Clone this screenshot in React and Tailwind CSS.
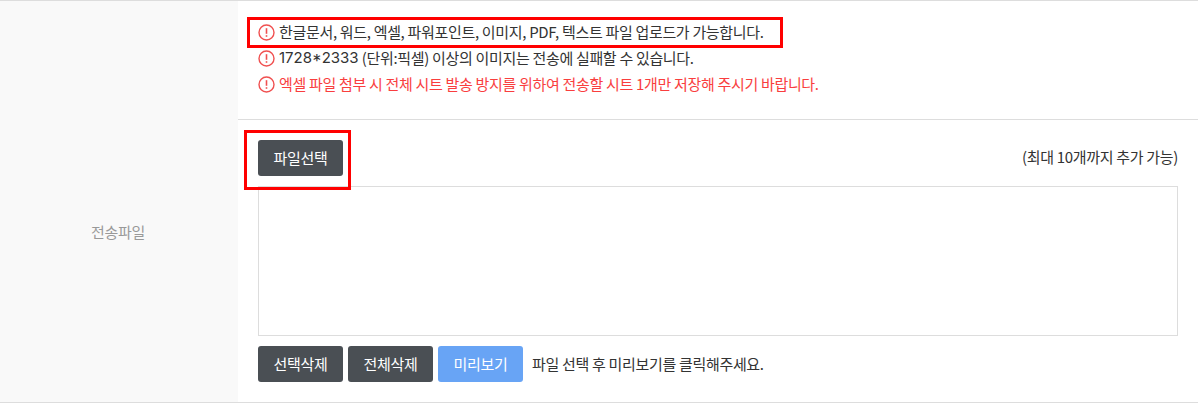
function WarnIcon() {
  return (
    <svg width="17" height="17" viewBox="0 0 17 17" className="mr-[4px] shrink-0" fill="none">
      <circle cx="8.5" cy="8.5" r="7.5" stroke="#f05050" strokeWidth="1.4" />
      <path d="M8.5 4.2v5.6" stroke="#f05050" strokeWidth="1.6" />
      <path d="M8.5 11.2v1.6" stroke="#f05050" strokeWidth="1.6" />
    </svg>
  )
}

function Notice({ children, red }) {
  return (
    <li className={`flex items-center h-[26px] whitespace-pre ${red ? 'text-[#f93e3e]' : 'text-[#333]'}`}>
      <WarnIcon />
      {children}
    </li>
  )
}

function Btn({ children, blue }) {
  return (
    <button className={`w-[85px] h-[36px] rounded-[3px] text-white text-[15px] ${blue ? 'bg-[#68a4f5]' : 'bg-[#4a4f54]'}`}>
      {children}
    </button>
  )
}

export default function App() {
  return (
    <div className="w-[1202px] h-[404px] bg-white font-['Noto_Sans_CJK_KR','Noto_Sans',sans-serif] text-[15px] text-[#333] tracking-[-0.32px]">
      <div className="flex w-[1198px] h-[403px] border-t border-b border-[#ddd]">
        <div className="w-[238px] bg-[#f9f9f9] flex items-center justify-center text-[#999] pt-[62px] pr-[2px]">
          전송파일
        </div>
        <div className="flex-1 flex flex-col">
          <ul className="h-[119px] border-b border-[#ddd] pl-5 pt-[18px] relative">
            <Notice>한글문서, 워드, 엑셀, 파워포인트, 이미지, PDF, 텍스트 파일 업로드가 가능합니다.</Notice>
            <Notice><span className="font-['Inter'] tracking-normal">1728*2333</span> (단위:픽셀) 이상의 이미지는 전송에 실패할 수 있습니다.</Notice>
            <Notice red>엑셀 파일 첨부 시 전체 시트 발송 방지를 위하여 전송할 시트 1개만 저장해 주시기 바랍니다.</Notice>
            <div className="absolute left-[9px] top-[16px] w-[536px] h-[31px] border-[3px] border-[#f00]" />
          </ul>
          <div className="flex-1 pl-5 pr-[20px] pt-[20px]">
            <div className="relative flex items-center justify-between">
              <Btn>파일선택</Btn>
              <span className="mb-[2px]">(최대 10개까지 추가 가능)</span>
              <div className="absolute left-[-14px] top-[-10px] w-[107px] h-[60px] border-[3px] border-[#f00]" />
            </div>
            <div className="mt-[10px] h-[150px] w-[920px] border border-[#ddd]" />
            <div className="mt-[10px] flex items-center gap-[5px]">
              <Btn>선택삭제</Btn>
              <Btn>전체삭제</Btn>
              <Btn blue>미리보기</Btn>
              <span className="ml-[4px]">파일 선택 후 미리보기를 클릭해주세요.</span>
            </div>
          </div>
        </div>
      </div>
    </div>
  )
}
